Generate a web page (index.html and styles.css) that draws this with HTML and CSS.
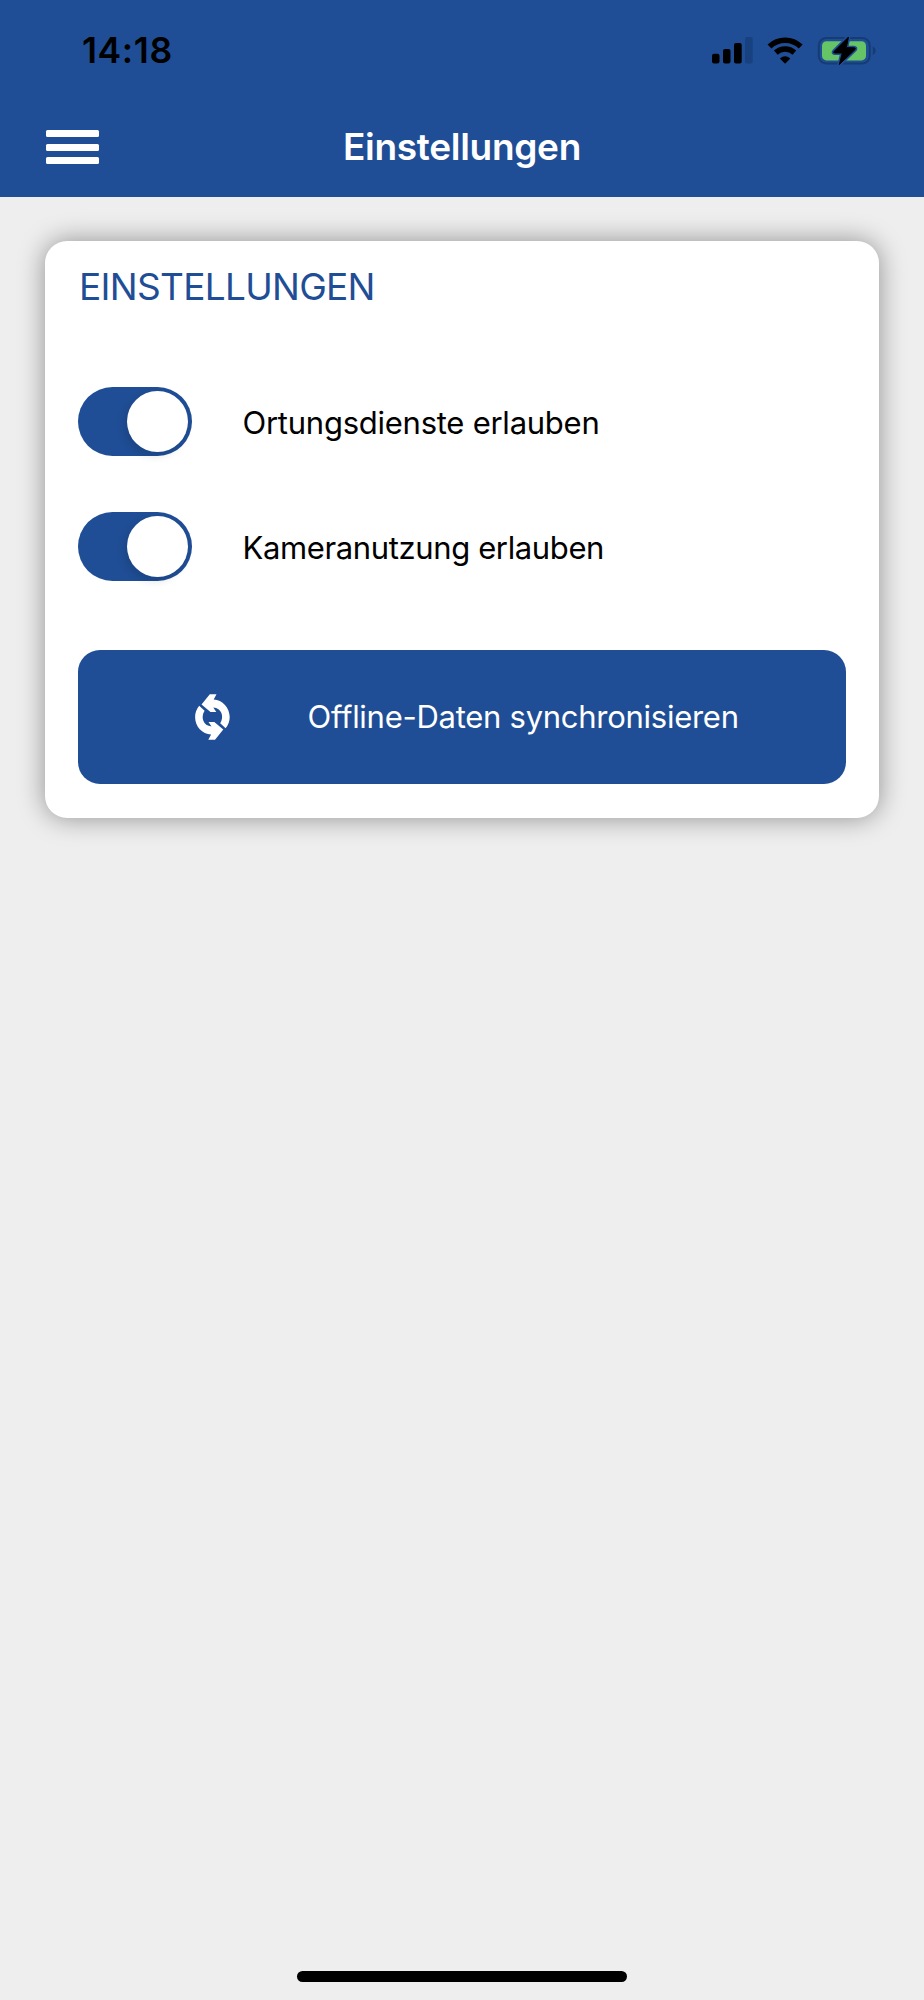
FILE: index.html
```html
<!DOCTYPE html>
<html lang="de">
<head>
<meta charset="utf-8">
<title>Einstellungen</title>
<link rel="stylesheet" href="styles.css">
</head>
<body>
<div class="screen">
  <header class="header">
    <div class="status">
      <span class="time">14:18</span>
      <svg class="status-icons" width="168" height="32" viewBox="0 0 168 32" aria-hidden="true">
        <rect x="2" y="19.7" width="7.5" height="9.8" rx="2"/>
        <rect x="13" y="15" width="7.5" height="14.5" rx="2"/>
        <rect x="24" y="9" width="7.7" height="20.5" rx="2"/>
        <rect x="35" y="3" width="7.7" height="26.5" rx="2" fill="#18417f"/>
        <g fill="none" stroke="#000" stroke-width="5.6">
          <path d="M59.5 12.5A22.5 22.5 0 0 1 90.700 12.5"/>
          <path d="M65.800 18.600A14 14 0 0 1 84.400 18.600"/>
        </g>
        <path d="M75.100 29.800L69.900 24.600Q75.100 19.800 80.300 24.600Z"/>
        <rect x="108.800" y="4" width="51" height="25.400" rx="7.500" fill="none" stroke="#163c74" stroke-width="2"/>
        <path d="M162.800 12.300Q165.800 14 165.800 16.700T162.800 21.300Z" fill="#163c74"/>
        <rect x="112" y="7.200" width="44" height="19.200" rx="4.500" fill="#65c466"/>
        <path d="M138.500 3L124 17.500Q123 19 125 19H132.300L129.300 30.500L145 15.600Q146 13.700 144 13.700H136.300Z" stroke="#1f4e96" stroke-width="4" stroke-linejoin="round"/>
        <path d="M138.500 3L124 17.500Q123 19 125 19H132.300L129.300 30.500L145 15.600Q146 13.700 144 13.700H136.300Z" stroke="#000" stroke-width="1" stroke-linejoin="round"/>
      </svg>
    </div>
    <div class="navbar">
      <button class="menu" aria-label="Menü"><i></i><i></i><i></i></button>
      <h1 class="page-title">Einstellungen</h1>
    </div>
  </header>
  <main class="content">
    <section class="card">
      <h2 class="card-title">EINSTELLUNGEN</h2>
      <div class="row">
        <span class="toggle"><span class="knob"></span></span>
        <span class="label label-location">Ortungsdienste erlauben</span>
      </div>
      <div class="row">
        <span class="toggle"><span class="knob"></span></span>
        <span class="label label-camera">Kameranutzung erlauben</span>
      </div>
      <button class="sync">
        <svg class="sync-icon" width="37" height="48" viewBox="0 0 37 48" aria-hidden="true">
          <path id="half" fill="#fff" d="M7.500 11.500L15.800 1.200H22.500L19.700 6.400C28.500 6.800 35.700 14.500 35.700 24Q35.700 30.200 31.600 35.200L26.200 30.200C30.500 23.500 27.500 15.200 19.300 14.500L22.300 19H16.500Z"/>
          <use href="#half" transform="rotate(180 18.400 24)"/>
        </svg>
        <span class="sync-label">Offline-Daten synchronisieren</span>
      </button>
    </section>
  </main>
  <footer class="footer"><div class="home-indicator"></div></footer>
</div>
</body>
</html>
```
FILE: styles.css
```css
* { box-sizing: border-box; }
body {
  margin: 0;
  background: #eee;
  font-family: Inter, "Liberation Sans", sans-serif;
}
h1, h2 { margin: 0; font-weight: 400; }
button { border: 0; padding: 0; background: none; font: inherit; color: inherit; }
.screen { display: flex; flex-direction: column; height: 2000px; }
.header { height: 196.5px; background: #1f4e96; }
.status {
  display: flex;
  justify-content: space-between;
  align-items: center;
  height: 102px;
  padding: 0 46px 0 82px;
}
.time { font-size: 35.5px; font-weight: 600; line-height: 40px; letter-spacing: .6px; }
.status-icons { display: block; margin-top: -2px; }
.navbar {
  display: grid;
  grid-template-columns: 100px 1fr 100px;
  align-items: center;
  height: 90px;
}
.menu { display: flex; flex-direction: column; gap: 6.800px; width: 53px; margin-left: 46px; }
.menu i { height: 7px; border-radius: 1.500px; background: #fff; }
.page-title { color: #fff; font-size: 37px; font-weight: 600; line-height: 44px; letter-spacing: -.3px; text-align: center; }
.content { flex: 1; padding: 44.500px 45px 0; }
.card {
  height: 577px;
  padding: 23px 33px 0;
  border-radius: 22px;
  background: #fff;
  box-shadow: 0 0 27px rgba(0, 0, 0, .4);
}
.card-title { height: 123px; padding-left: 1px; color: #1f4e96; font-size: 37px; line-height: 46px; letter-spacing: -.7px; }
.row { display: flex; align-items: center; gap: 50.500px; height: 69px; margin-bottom: 56px; }
.toggle {
  display: flex;
  justify-content: flex-end;
  align-items: center;
  width: 114px;
  height: 69px;
  padding-right: 4px;
  border-radius: 35px;
  background: #1f4e96;
}
.knob {
  width: 61px;
  height: 61px;
  border-radius: 50%;
  background: #fff;
  box-shadow: -3px 4px 9px rgba(0, 0, 0, .12);
}
.label { font-size: 31px; line-height: 40px; white-space: nowrap; margin-top: 2px; }
.label-location { letter-spacing: -.25px; }
.label-camera { letter-spacing: -.37px; }
.sync {
  display: flex;
  align-items: center;
  gap: 76.500px;
  width: 768px;
  height: 134px;
  margin-top: 69px;
  padding-left: 116px;
  border-radius: 22px;
  background: #1f4e96;
  color: #fff;
}
.sync-label { font-size: 31px; line-height: 40px; letter-spacing: -.27px; white-space: nowrap; }
.footer { display: flex; justify-content: center; height: 29px; }
.home-indicator { width: 330px; height: 11px; border-radius: 6px; background: #000; }
```
